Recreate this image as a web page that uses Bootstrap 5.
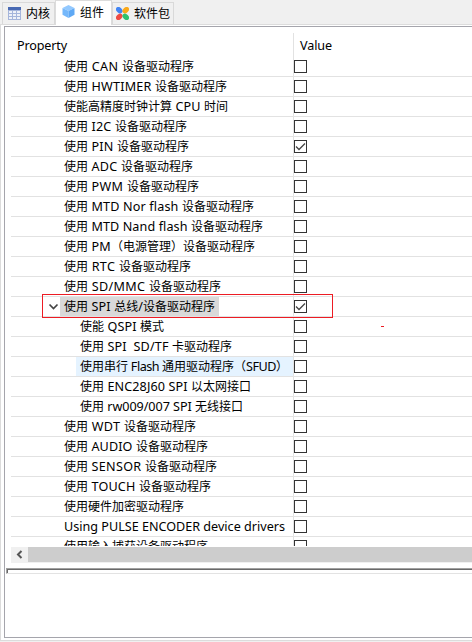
<!DOCTYPE html>
<html lang="zh-CN">
<head>
<meta charset="utf-8">
<meta name="viewport" content="width=device-width, initial-scale=1">
<title>RT-Thread Settings</title>
<link href="https://cdn.jsdelivr.net/npm/bootstrap@5.3.0/dist/css/bootstrap.min.css" rel="stylesheet">
<style>
html,body{height:642px;overflow:hidden}
body{background:#f0f0f0;color:#000;font:12px/18px "Noto Sans","Noto Sans CJK SC",sans-serif}
.tabs{height:24px;padding-left:2px}
.tab-i{height:22px;margin-top:2px;border:1px solid #d9d9d9;border-bottom:0;background:#f0f0f0;padding-left:5px;line-height:22px;gap:5px}
.tab-i svg{flex:none}
.tab-a{height:25px;margin-top:0;background:#fff;border-color:#dcdcdc;position:relative;z-index:1;line-height:23px;padding:0 0 2px 6px}
.tab-a svg{margin-bottom:1px}
.page{height:617px;background:#fff;border-left:1px solid #dcdcdc;border-top:1px solid #dcdcdc;border-bottom:1px solid #dcdcdc;padding:1px 0 2px 3px}
.panel{height:612px;border:1px solid #a5a5ac;border-right:0;background:#fff}
.grid{height:513px;margin:6px 0 0 6px;overflow:hidden;position:relative;z-index:0}
.hd{height:24px;font-size:12.6px;line-height:25px}
.hd>*{padding-left:6px}
.c1{width:283px;border-right:1px solid #e2e2e2;flex:none;white-space:pre}
.r{height:20px;border-bottom:1px solid #e2e2e2}
.r .c1{height:20px;padding-left:53px;line-height:19px;position:relative}
.r.sub .c1{padding-left:69px}
.lt{font-size:12.6px;line-height:1}
.bx{width:13px;height:13px;border:1px solid #333;margin-top:3px;background:#fff}
.bx svg{display:block}
.t{display:inline-block}
.sel .c1::before,.hot .c1::before{content:"";position:absolute;top:0;height:19px;z-index:-1}
.sel .c1::before{left:49px;width:159px;background:#d9d9d9}
.hot .c1::before{left:65px;right:0;background:#e5f3ff}
.arrow{position:absolute;left:37px;top:6px}
.frame{position:absolute;left:42px;top:294px;width:291px;height:24px;border:1px solid #ed1c24;z-index:3}
.dash{position:absolute;left:381px;top:326px;width:3px;height:1px;background:#ed1c24}
.sb{height:16px;margin:1px 0 0 6px;background:#f0f0f0}
.sb svg{flex:none}
.thumb{background:#cdcdcd;height:15px}
.sash{height:6px;margin:5px 0 0 1px;border-top:1px solid #a0a0a0;border-left:1px solid #a0a0a0;border-bottom:1px solid #e3e3e3}
.sash div{height:4px;border-top:1px solid #696969;border-left:1px solid #696969}
.tab-kernel{width:53px}
.tab-comp{width:57px}
.tab-pkg{width:62px;padding-left:3px}
</style>
<script src="https://cdn.jsdelivr.net/npm/bootstrap@5.3.0/dist/js/bootstrap.bundle.min.js"></script>
</head>
<body>
<div class="tabs d-flex">
<div class="tab-i tab-kernel d-flex align-items-center"><svg width="13" height="13" viewBox="0 0 13 13"><path fill="#a5b5db" d="M0 0h13v13H0z"/><path fill="#4869b3" d="M0 0h13v3H0z"/><path fill="#eef1f8" d="M1 4h3v2H1zM5 4h3v2H5zM9 4h3v2H9zM1 7h3v2H1zM5 7h3v2H5zM9 7h3v2H9zM1 10h3v2H1zM5 10h3v2H5zM9 10h3v2H9z"/></svg><span class="t" data-w="24">内核</span></div>
<div class="tab-i tab-a tab-comp d-flex align-items-center"><svg width="13" height="13" viewBox="0 0 13 13"><path fill="#93c9ff" d="M6.500 0 12.500 3 6.500 6 .5 3z"/><path fill="#75b8fb" d="M.5 3 6.500 6v7L.5 9.800z"/><path fill="#5fa9f5" d="M12.500 3 6.500 6v7l6-3.200z"/></svg><span class="t" data-w="24">组件</span></div>
<div class="tab-i tab-pkg d-flex align-items-center"><svg width="13" height="13" viewBox="0 0 13 13"><ellipse cx="3.200" cy="3.200" rx="3.700" ry="2.700" transform="rotate(45 3.200 3.200)" fill="#4285f4"/><ellipse cx="9.800" cy="3.200" rx="3.700" ry="2.700" transform="rotate(-45 9.800 3.200)" fill="#fba919"/><ellipse cx="3.200" cy="9.800" rx="3.700" ry="2.700" transform="rotate(-45 3.200 9.800)" fill="#ee4b44"/><ellipse cx="9.800" cy="9.800" rx="3.700" ry="2.700" transform="rotate(45 9.800 9.800)" fill="#2fc26e"/></svg><span class="t" data-w="36">软件包</span></div>
</div>
<div class="page"><div class="panel">
<div class="grid">
<div class="hd d-flex"><div class="c1"><span class="t" data-w="50">Property</span></div><div><span class="t" data-w="32">Value</span></div></div>
<div id="rows"></div>
</div>
<div class="sb d-flex"><svg width="17" height="15" viewBox="0 0 17 15"><path d="M10.500 4 7 7.500l3.500 3.500" fill="none" stroke="#555" stroke-width="2"/></svg><div class="thumb flex-grow-1"></div></div>
<div class="sash"><div></div></div>
</div></div>
<div class="frame"></div><div class="dash"></div>
<script>
// [label, text width, row classes, checked]
const rows=[
["使用 CAN 设备驱动程序",130],["使用 HWTIMER 设备驱动程序",163],["使能高精度时钟计算 CPU 时间",164],["使用 I2C 设备驱动程序",123],["使用 PIN 设备驱动程序",125,"",1],["使用 ADC 设备驱动程序",129],["使用 PWM 设备驱动程序",135],["使用 MTD Nor flash 设备驱动程序",190],["使用 MTD Nand flash 设备驱动程序",199],["使用 PM（电源管理）设备驱动程序",191],["使用 RTC 设备驱动程序",127],["使用 SD/MMC 设备驱动程序",157],["使用 SPI 总线/设备驱动程序",151,"sel",1],["使能 QSPI 模式",84,"sub"],["使用 SPI  SD/TF 卡驱动程序",152,"sub"],["使用串行 Flash 通用驱动程序（SFUD）",208,"sub hot"],["使用 ENC28J60 SPI 以太网接口",171,"sub"],["使用 rw009/007 SPI 无线接口",163,"sub"],["使用 WDT 设备驱动程序",132],["使用 AUDIO 设备驱动程序",144],["使用 SENSOR 设备驱动程序",153],["使用 TOUCH 设备驱动程序",147],["使用硬件加密驱动程序",120],["Using PULSE ENCODER device drivers",221],["使用输入捕获设备驱动程序",144]];
document.getElementById("rows").innerHTML=rows.map(([s,w,c,k])=>`<div class="r d-flex ${c||""}"><div class="c1">${c=="sel"?'<svg class="arrow" width="11" height="8" viewBox="0 0 11 8"><path d="M1.500 1.500l4 4 4-4" fill="none" stroke="#444" stroke-width="1.700"/></svg>':""}<span class="t" data-w="${w}">${s}</span></div><div class="bx">${k?'<svg width="11" height="11" viewBox="0 0 11 11"><path d="M1 5.500l3 3 6-6" fill="none" stroke="#444" stroke-width="1.300"/></svg>':""}</div></div>`).join("");
const han=/([\u4e00-\u9fff\uff08\uff09]+)/;
document.querySelectorAll("[data-w]").forEach(e=>{
const s=e.textContent,n=[...s].filter(ch=>!han.test(ch)).length;
if(!n)return;
e.innerHTML=s.split(han).map(p=>han.test(p)?p:`<span class="lt">${p}</span>`).join("");
const d=(e.dataset.w-e.getBoundingClientRect().width)/n;
e.querySelectorAll(".lt").forEach(x=>x.style.letterSpacing=d+"px");
});
</script>
</body>
</html>
